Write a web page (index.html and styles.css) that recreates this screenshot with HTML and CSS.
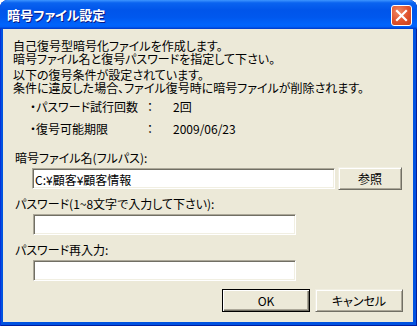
FILE: index.html
```html
<!DOCTYPE html>
<html lang="ja">
<head>
    <meta charset="utf-8">
    <link rel="stylesheet" href="styles.css">
</head>
<body>
    <div class="window">
        <div class="titlebar">
            <span class="caption">暗号ファイル設定</span>
            <div class="close">
                <svg width="13" height="13" viewBox="0 0 13 13">
                    <path d="M2 2 L11 11 M11 2 L2 11" stroke="#fff" stroke-width="2.2" stroke-linecap="square"/>
                </svg>
            </div>
        </div>
        <div class="content">
            <p class="text">自己復号型暗号化ファイルを作成します。<br>暗号ファイル名と復号パスワードを指定して下さい。</p>
            <p class="text second">以下の復号条件が設定されています。<br>条件に違反した場合、ファイル復号時に暗号ファイルが削除されます。</p>
            <div class="conditions">
                <span>・パスワード試行回数</span><span>：</span><span>2回</span>
                <span>・復号可能期限</span><span>：</span><span>2009/06/23</span>
            </div>

            <label class="label first" for="file">暗号ファイル名(フルパス):</label>
            <div class="row">
                <input class="field wide" id="file" type="text" value="C:¥顧客¥顧客情報">
                <button class="btn browse">参照</button>
            </div>

            <label class="label" for="pass">パスワード(1~8文字で入力して下さい):</label>
            <input class="field" id="pass" type="password">

            <label class="label third" for="pass2">パスワード再入力:</label>
            <input class="field" id="pass2" type="password">

            <div class="actions">
                <button class="btn default">OK</button>
                <button class="btn">キャンセル</button>
            </div>
        </div>
    </div>
</body>
</html>
```

FILE: styles.css
```css
html, body {
    margin: 0;
    padding: 0;
    background: #fff;
}

* {
    box-sizing: border-box;
    font-family: "Noto Sans CJK JP", "Noto Sans", sans-serif;
    font-feature-settings: "palt";
}

.window {
    width: 417px;
    height: 326px;
    display: flex;
    flex-direction: column;
    background: #0052e0;
    border-radius: 8px 8px 0 0;
    overflow: hidden;
    box-shadow: inset 1px 0 #0831d9, inset -1px 0 #001ea0, inset 0 -1px #001ea0;
}

.titlebar {
    height: 29px;
    display: flex;
    align-items: center;
    justify-content: space-between;
    padding: 0 5px 0 7px;
    background: linear-gradient(to bottom, #3d95ff 0%, #0a63f0 10%, #0055ea 35%, #0058ee 60%, #0064fc 85%, #0060f8 92%, #0046d8 97%, #003ac8 100%);
}

.caption {
    color: #fff;
    font-size: 13px;
    font-weight: bold;
    text-shadow: 1px 1px #0a1883;
    line-height: 14px;
    margin-top: 1px;
}

.close {
    width: 21px;
    height: 21px;
    border: 1px solid #fff;
    border-radius: 3px;
    background: radial-gradient(circle at 35% 30%, #f08a65 0%, #e0522c 55%, #c8401c 100%);
    display: flex;
    align-items: center;
    justify-content: center;
    margin-top: 1px;
}

.content {
    flex: 1;
    margin: 0 4px 4px 3px;
    background: #ece9d8;
    padding: 10px 10px 0 10px;
    font-size: 12px;
    color: #000;
}

.text {
    margin: 0;
    line-height: 13px;
}

.text.second {
    margin-top: 3px;
}

.conditions {
    display: grid;
    grid-template-columns: 117px 26px auto;
    grid-auto-rows: 22px;
    align-items: center;
    padding-left: 17px;
    margin-top: 1px;
}

.label {
    display: block;
    line-height: 13px;
    padding-left: 2px;
    margin-top: 7px;
    margin-bottom: 4px;
}

.label.first {
    margin-top: 12px;
    margin-bottom: 3px;
}

.label.third {
    margin-top: 8px;
    margin-bottom: 4px;
}

.row {
    display: flex;
    align-items: center;
    gap: 3px;
}

.field {
    display: block;
    width: 263px;
    height: 21px;
    margin-left: 20px;
    padding: 1px 2px 0;
    font-size: 12px;
    background: #fff;
    border-style: solid;
    border-width: 1px;
    border-color: #aca899 #fff #fff #aca899;
    box-shadow: inset 1px 1px #716f64, inset -1px -1px #f1efe2;
    outline: 0;
}

.field.wide {
    width: 303px;
    margin-left: 19px;
}

.btn {
    height: 23px;
    width: 88px;
    padding: 0;
    font-size: 12px;
    color: #000;
    background: #ece9d8;
    border-style: solid;
    border-width: 1px;
    border-color: #f1efe2 #716f64 #716f64 #f1efe2;
    box-shadow: inset 1px 1px #fff, inset -1px -1px #aca899;
}

.btn.browse {
    width: 64px;
}

.btn.default {
    border-color: #000;
    box-shadow: inset 1px 1px #fff, inset -1px -1px #716f64, inset -2px -2px #aca899;
}

.actions {
    display: flex;
    justify-content: flex-end;
    gap: 5px;
    margin-top: 8px;
}
```
